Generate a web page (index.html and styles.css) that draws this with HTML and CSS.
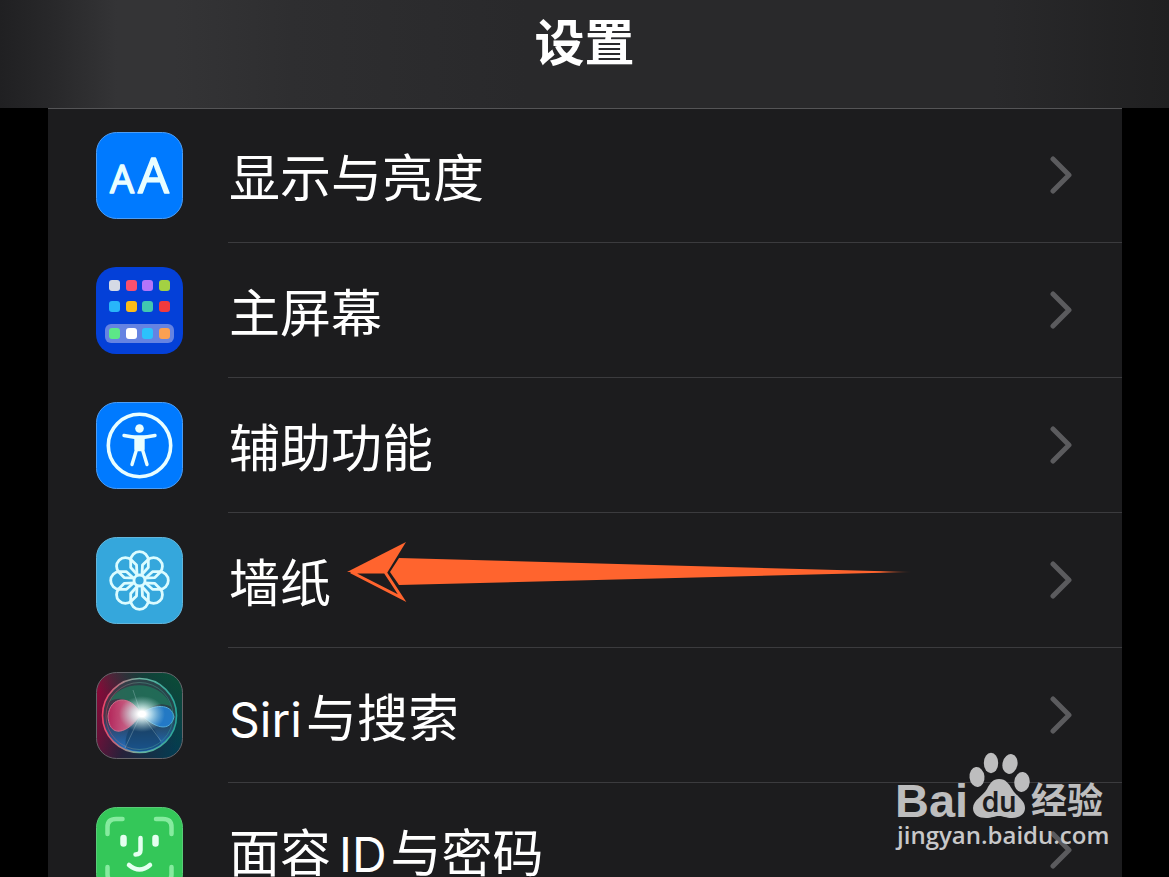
FILE: index.html
```html
<!DOCTYPE html>
<html lang="zh-CN">
  <head>
    <meta charset="UTF-8" />
    <meta name="viewport" content="width=device-width, initial-scale=1.0" />
    <title>设置</title>
    <link rel="stylesheet" href="styles.css">
  </head>
  <body>
    <header class="header">
      <h1>设置</h1>
    </header>

    <main class="content">
      <ul class="settings">
        <li>
          <a href="#display" class="row">
            <svg class="icon" viewBox="0 0 87 87" aria-hidden="true">
              <rect x="0.5" y="0.5" width="86" height="86" rx="20" fill="#007aff" stroke="#4c9df5" />
              <g class="icon-letters">
                <text x="14" y="61" font-size="38">A</text>
                <text x="42" y="61" font-size="49">A</text>
              </g>
            </svg>
            <span class="row-body">
              <span class="label">显示与亮度</span>
              <svg class="chevron" viewBox="0 0 22 38" aria-hidden="true"><path d="M3 3l16 16L3 35" /></svg>
            </span>
          </a>
        </li>

        <li>
          <a href="#home" class="row">
            <svg class="icon" viewBox="0 0 87 87" aria-hidden="true">
              <rect width="87" height="87" rx="20" fill="#0440d8" />
              <rect x="9" y="57" width="69" height="19" rx="6" fill="#6583e2" />
              <rect x="13" y="13" width="11" height="11" rx="3" fill="#d5dae5" />
              <rect x="30" y="13" width="11" height="11" rx="3" fill="#fa506e" />
              <rect x="46" y="13" width="11" height="11" rx="3" fill="#b474fa" />
              <rect x="63" y="13" width="11" height="11" rx="3" fill="#a3d143" />
              <rect x="13" y="34" width="11" height="11" rx="3" fill="#28b5fa" />
              <rect x="30" y="34" width="11" height="11" rx="3" fill="#fcbc18" />
              <rect x="46" y="34" width="11" height="11" rx="3" fill="#40c8b0" />
              <rect x="63" y="34" width="11" height="11" rx="3" fill="#f03a3e" />
              <rect x="13" y="61" width="11" height="11" rx="3" fill="#5ce888" />
              <rect x="30" y="61" width="11" height="11" rx="3" fill="#fff" />
              <rect x="46" y="61" width="11" height="11" rx="3" fill="#2cc2fc" />
              <rect x="63" y="61" width="11" height="11" rx="3" fill="#fba052" />
            </svg>
            <span class="row-body">
              <span class="label">主屏幕</span>
              <svg class="chevron" viewBox="0 0 22 38" aria-hidden="true"><path d="M3 3l16 16L3 35" /></svg>
            </span>
          </a>
        </li>

        <li>
          <a href="#accessibility" class="row">
            <svg class="icon" viewBox="0 0 87 87" aria-hidden="true">
              <rect x="0.5" y="0.5" width="86" height="86" rx="20" fill="#007aff" stroke="#4c9df5" />
              <circle cx="43.5" cy="43.5" r="31.2" fill="none" stroke="#e9feff" stroke-width="3.6" />
              <circle cx="43.5" cy="26.5" r="4.3" fill="#e9feff" />
              <path d="M28 33.5l10.5 1.8h10L59 33.5M40 36.5h7v11h-7zM41 46l-5 16.5M46 46l5 16.5" fill="#e9feff" stroke="#e9feff" stroke-width="3.4" stroke-linecap="round" stroke-linejoin="round" />
            </svg>
            <span class="row-body">
              <span class="label">辅助功能</span>
              <svg class="chevron" viewBox="0 0 22 38" aria-hidden="true"><path d="M3 3l16 16L3 35" /></svg>
            </span>
          </a>
        </li>

        <li>
          <a href="#wallpaper" class="row">
            <svg class="icon" viewBox="0 0 87 87" aria-hidden="true">
              <defs>
                <path id="petal" d="M-1.500 -5L-8.800 -13V-20A8.800 8.800 0 0 1 8.800 -20V-13L1.500 -5" />
              </defs>
              <rect x="0.5" y="0.5" width="86" height="86" rx="20" fill="#35a7dc" stroke="#62b6dc" />
              <g transform="translate(43.5 43.5)" fill="none" stroke="#dcfcff" stroke-width="2.8" stroke-linejoin="round">
                <use href="#petal" />
                <use href="#petal" transform="rotate(45)" />
                <use href="#petal" transform="rotate(90)" />
                <use href="#petal" transform="rotate(135)" />
                <use href="#petal" transform="rotate(180)" />
                <use href="#petal" transform="rotate(225)" />
                <use href="#petal" transform="rotate(270)" />
                <use href="#petal" transform="rotate(315)" />
                <circle r="5.5" fill="#35a7dc" />
              </g>
            </svg>
            <span class="row-body">
              <span class="label">墙纸</span>
              <svg class="chevron" viewBox="0 0 22 38" aria-hidden="true"><path d="M3 3l16 16L3 35" /></svg>
              <svg class="arrow" viewBox="0 0 566 62" aria-hidden="true">
                <defs>
                  <linearGradient id="shaft" x1="0" x2="1">
                    <stop offset="0.94" stop-color="#ff642e" />
                    <stop offset="1" stop-color="#ff642e" stop-opacity="0.1" />
                  </linearGradient>
                </defs>
                <path d="M52 17L565 31L52 44L43 31z" fill="url(#shaft)" />
                <path d="M0 31L59 1L40 32z" fill="#ff642e" />
                <path d="M4 31H38L55 57z" fill="#1c1c1e" stroke="#ff642e" stroke-width="3" />
              </svg>
            </span>
          </a>
        </li>

        <li>
          <a href="#siri" class="row">
            <svg class="icon" viewBox="0 0 87 87" aria-hidden="true">
              <defs>
                <linearGradient id="siri-bg" x1="0" y1="0.3" x2="1" y2="0.6">
                  <stop offset="0" stop-color="#850b38" />
                  <stop offset="0.45" stop-color="#26213a" />
                  <stop offset="1" stop-color="#053b50" />
                </linearGradient>
                <linearGradient id="siri-top" x1="0.4" y1="0.5" x2="0.8" y2="0">
                  <stop offset="0" stop-color="#0b4a38" stop-opacity="0" />
                  <stop offset="1" stop-color="#0b4a38" />
                </linearGradient>
                <linearGradient id="siri-ring" x1="0" y1="0.5" x2="1" y2="0.5">
                  <stop offset="0" stop-color="#f04268" />
                  <stop offset="0.5" stop-color="#6ab4a0" />
                  <stop offset="1" stop-color="#28a69a" />
                </linearGradient>
                <linearGradient id="siri-floor" x1="0" y1="0" x2="0" y2="1">
                  <stop offset="0.5" stop-color="#1660b0" stop-opacity="0" />
                  <stop offset="1" stop-color="#2478d0" />
                </linearGradient>
                <linearGradient id="siri-pink" x1="0" y1="0" x2="1" y2="0">
                  <stop offset="0" stop-color="#c0245c" />
                  <stop offset="1" stop-color="#e890a8" />
                </linearGradient>
                <radialGradient id="siri-glow">
                  <stop offset="0.15" stop-color="#fff" />
                  <stop offset="0.45" stop-color="#d8f4f4" stop-opacity="0.7" />
                  <stop offset="1" stop-color="#b0dcdc" stop-opacity="0" />
                </radialGradient>
              </defs>
              <rect x="0.5" y="0.5" width="86" height="86" rx="20" fill="url(#siri-bg)" />
              <rect x="0.5" y="0.5" width="86" height="86" rx="20" fill="url(#siri-top)" stroke="#66646a" />
              <circle cx="43.5" cy="43.5" r="37" fill="#34464e" opacity="0.7" />
              <circle cx="43.5" cy="43.5" r="37" fill="url(#siri-floor)" />
              <path d="M13 30C24 8 64 6 76 35C62 28 54 36 45 42C36 28 24 23 13 30z" fill="#1c8560" opacity="0.6" />
              <path d="M45 42C32 55 28 66 30 76C42 82 57 79 65 72C60 58 54 49 45 42z" fill="#133e64" opacity="0.6" />
              <path d="M45 42C34 22 14 24 12 44C13 66 31 63 45 42z" fill="url(#siri-pink)" stroke="#dd7591" opacity="0.9" />
              <path d="M45 42C57 32 76 31 78 45C74 61 58 56 45 42z" fill="#237fd2" stroke="#58b6e8" opacity="0.9" />
              <path d="M45 42L29 76M45 42L65 69M45 42L37 18" stroke="#b5d5d8" stroke-opacity="0.3" />
              <circle cx="43.5" cy="43.5" r="37" fill="none" stroke="url(#siri-ring)" stroke-width="1.6" />
              <circle cx="43.5" cy="44" r="33.5" fill="none" stroke="url(#siri-ring)" stroke-opacity="0.4" />
              <ellipse cx="46" cy="42" rx="23" ry="18" fill="url(#siri-glow)" />
            </svg>
            <span class="row-body">
              <span class="label"><span class="latin">Siri</span>与搜索</span>
              <svg class="chevron" viewBox="0 0 22 38" aria-hidden="true"><path d="M3 3l16 16L3 35" /></svg>
            </span>
          </a>
        </li>

        <li>
          <a href="#faceid" class="row">
            <svg class="icon" viewBox="0 0 87 87" aria-hidden="true">
              <rect x="0.5" y="0.5" width="86" height="86" rx="20" fill="#34c759" stroke="#5acb78" />
              <g fill="none" stroke-linecap="round" stroke-linejoin="round">
                <path d="M11.5 27V20Q11.5 12 20 12H26.5M60 12H67Q75.5 12 75.5 20V27M11.5 60V67Q11.5 75 20 75H26.5M60 75H67Q75.5 75 75.5 67V60" stroke="#86eb9f" stroke-width="4.5" />
                <path d="M27.5 31V36.5M59.5 31V36.5" stroke="#e4fff0" stroke-width="6.5" />
                <path d="M44.5 31V43Q44.5 47.5 39.5 47.5" stroke="#e4fff0" stroke-width="4.5" />
                <path d="M33 58Q43.5 67 54 58" stroke="#e4fff0" stroke-width="4.5" />
              </g>
            </svg>
            <span class="row-body">
              <span class="label">面容<span class="latin latin-mid">ID</span>与密码</span>
              <svg class="chevron" viewBox="0 0 22 38" aria-hidden="true"><path d="M3 3l16 16L3 35" /></svg>
            </span>
          </a>
        </li>
      </ul>
    </main>

    <div class="watermark">
      <svg class="brand" viewBox="0 0 208 70">
        <text class="brand-bai" x="-2" y="67">Bai</text>
        <ellipse cx="80" cy="27" rx="7.5" ry="10" transform="rotate(-6 80 27)" />
        <ellipse cx="94" cy="13" rx="7.2" ry="10.2" />
        <ellipse cx="113" cy="14" rx="7.5" ry="10" transform="rotate(12 113 14)" />
        <ellipse cx="125" cy="32" rx="7.7" ry="10" transform="rotate(6 125 32)" />
        <path d="M102 29C109 29 112 34 115 39C119 46 128 50 128 58C128 65 121 68 115 68C109 68 106 66 102 66C98 66 95 68 89 68C82 68 76 65 76 58C76 50 86 46 90 39C93 33 96 29 102 29z" />
        <text class="brand-du" x="102" y="62">du</text>
        <text class="brand-jy" x="134" y="64">经验</text>
      </svg>
      <span class="site">jingyan.baidu.com</span>
    </div>
  </body>
</html>
```
FILE: styles.css
```css
* {
  box-sizing: border-box;
}

body {
  margin: 0;
  height: 100vh;
  overflow: hidden;
  position: relative;
  background: #000;
  color: #fff;
  font-family: Inter, "Noto Sans CJK SC", sans-serif;
}

.header {
  height: 108px;
  padding-top: 8px;
  position: relative;
  text-align: center;
  background: linear-gradient(to right, #202022 0, #29292b 5%, #343436 10%, #343436 15%, #2e2e30 25%, #29292b 45%, #29292b 85%, #202021 100%);
}

/* hairline under the title bar */
.header::after {
  content: '';
  position: absolute;
  left: 48px;
  right: 47px;
  bottom: -1px;
  height: 1px;
  background: #545456;
}

h1 {
  margin: 0;
  font-size: 50px;
  line-height: 70px;
  font-weight: 700;
}

.content {
  margin: 0 47px 0 48px;
  background: #1c1c1e;
}

.settings {
  margin: 0;
  padding: 0;
  list-style: none;
}

.row {
  display: flex;
  align-items: center;
  gap: 45px;
  padding-left: 48px;
  color: #fff;
  text-decoration: none;
}

.icon {
  width: 87px;
  height: 87px;
  flex: none;
}

.icon-letters {
  font-family: "Open Sans", sans-serif;
  font-weight: 500;
  fill: #e9feff;
  stroke: #e9feff;
  stroke-width: 1.5;
  stroke-linejoin: round;
}

.row-body {
  flex: 1;
  height: 135px;
  display: flex;
  align-items: center;
  justify-content: space-between;
  padding-right: 50px;
  border-bottom: 1px solid #3b3b3e;
  position: relative;
}

.label {
  padding: 8px 0 0 1px;
  font-size: 51px;
  line-height: 72px;
}

.latin {
  margin-right: 4px;
  font-size: 48px;
}

.latin-mid {
  margin-left: 8px;
}

.chevron {
  width: 22px;
  height: 38px;
  fill: none;
  stroke: #5b5b5e;
  stroke-width: 5;
  stroke-linecap: round;
  stroke-linejoin: round;
}

.arrow {
  position: absolute;
  left: 119px;
  top: 28px;
  width: 566px;
  height: 62px;
}

.watermark {
  position: absolute;
  right: 64px;
  bottom: 27px;
  width: 208px;
  display: flex;
  flex-direction: column;
  color: #c8c8c9;
}

.brand {
  width: 208px;
  height: 70px;
  fill: #bdbdbe;
}

.brand-bai {
  font-family: "Liberation Sans", sans-serif;
  font-size: 47px;
  font-weight: 700;
}

.brand-du {
  font-family: Inter, sans-serif;
  font-size: 28px;
  font-weight: 600;
  fill: #1c1c1e;
  text-anchor: middle;
}

.brand-jy {
  font-size: 36px;
  font-weight: 700;
}

.site {
  font-family: "Open Sans", sans-serif;
  font-size: 24px;
  line-height: 30px;
  font-weight: 600;
}
```
